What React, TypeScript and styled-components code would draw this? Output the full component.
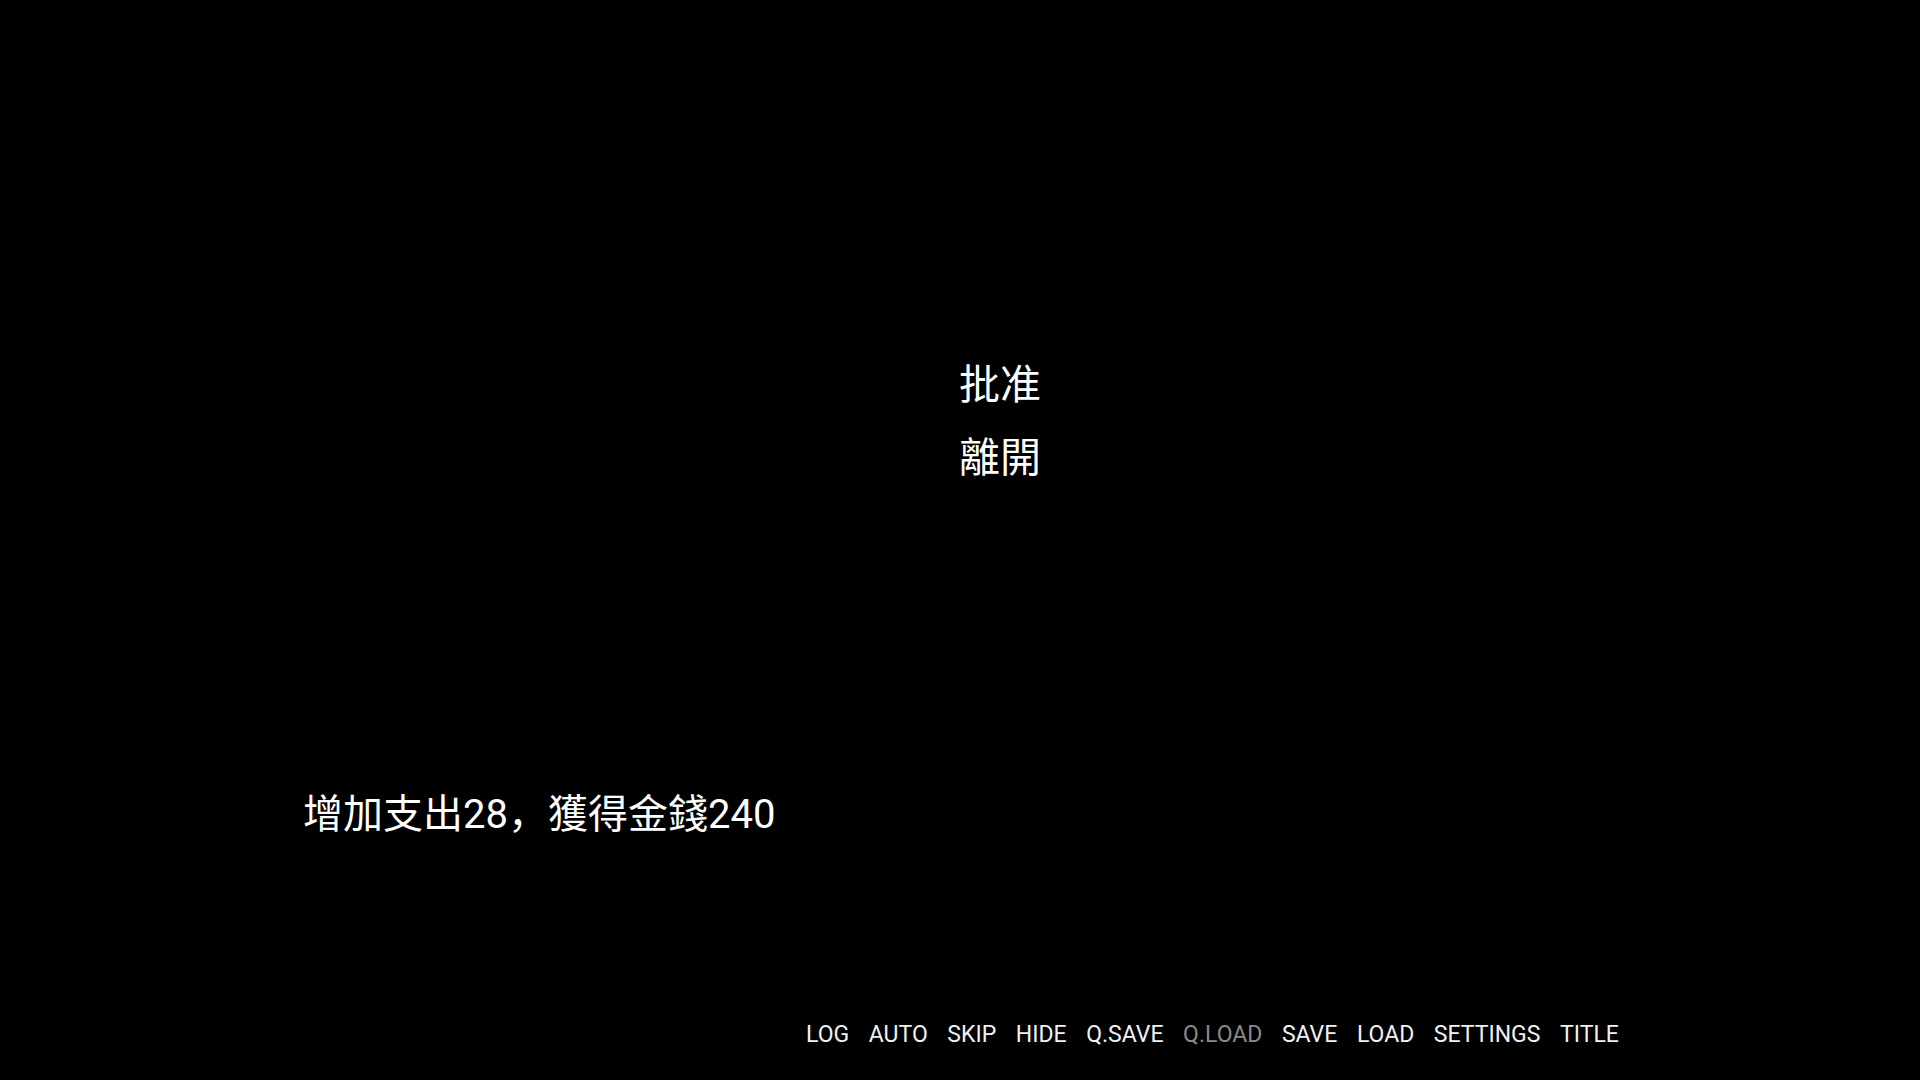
import React from 'react';
import styled, { createGlobalStyle } from 'styled-components';

const GlobalStyle = createGlobalStyle`
  html, body {
    margin: 0;
    padding: 0;
    background: #000;
  }
  body {
    font-family: Roboto, "Noto Sans CJK SC", sans-serif;
  }
`;

const Screen = styled.div`
  width: 1920px;
  height: 1080px;
  background: #000;
  color: #fff;
  display: flex;
  flex-direction: column;
  overflow: hidden;
`;

const ChoiceList = styled.div`
  display: flex;
  flex-direction: column;
  align-items: center;
  gap: 32px;
  padding: 361px 0 0 80px;
`;

const Choice = styled.button`
  background: none;
  border: none;
  padding: 0;
  color: #fff;
  font-family: "Noto Sans CJK SC", sans-serif;
  font-size: 41px;
  line-height: 41px;
  cursor: pointer;
`;

const Dialogue = styled.div`
  margin-top: 320px;
  padding-left: 303px;
  font-family: Roboto, "Noto Sans CJK SC", sans-serif;
  font-size: 40px;
  line-height: 40px;
  color: #fff;
`;

const QuickMenu = styled.nav`
  margin-top: 188px;
  padding-left: 806px;
  display: flex;
  gap: 19.6px;
`;

const QuickButton = styled.button<{ $disabled?: boolean }>`
  background: none;
  border: none;
  padding: 0;
  font-family: Roboto, sans-serif;
  font-size: 23px;
  line-height: 24px;
  color: ${(p) => (p.$disabled ? '#8a8a8a' : '#f2f2f2')};
  cursor: ${(p) => (p.$disabled ? 'default' : 'pointer')};
`;

const quickItems = ['LOG', 'AUTO', 'SKIP', 'HIDE', 'Q.SAVE', 'Q.LOAD', 'SAVE', 'LOAD', 'SETTINGS', 'TITLE'];

const App: React.FC = () => {
  return (
    <>
      <GlobalStyle />
      <Screen>
        <ChoiceList>
          <Choice>批准</Choice>
          <Choice>離開</Choice>
        </ChoiceList>
        <Dialogue>增加支出28，獲得金錢240</Dialogue>
        <QuickMenu>
          {quickItems.map((item) => (
            <QuickButton key={item} $disabled={item === 'Q.LOAD'}>
              {item}
            </QuickButton>
          ))}
        </QuickMenu>
      </Screen>
    </>
  );
};

export default App;
